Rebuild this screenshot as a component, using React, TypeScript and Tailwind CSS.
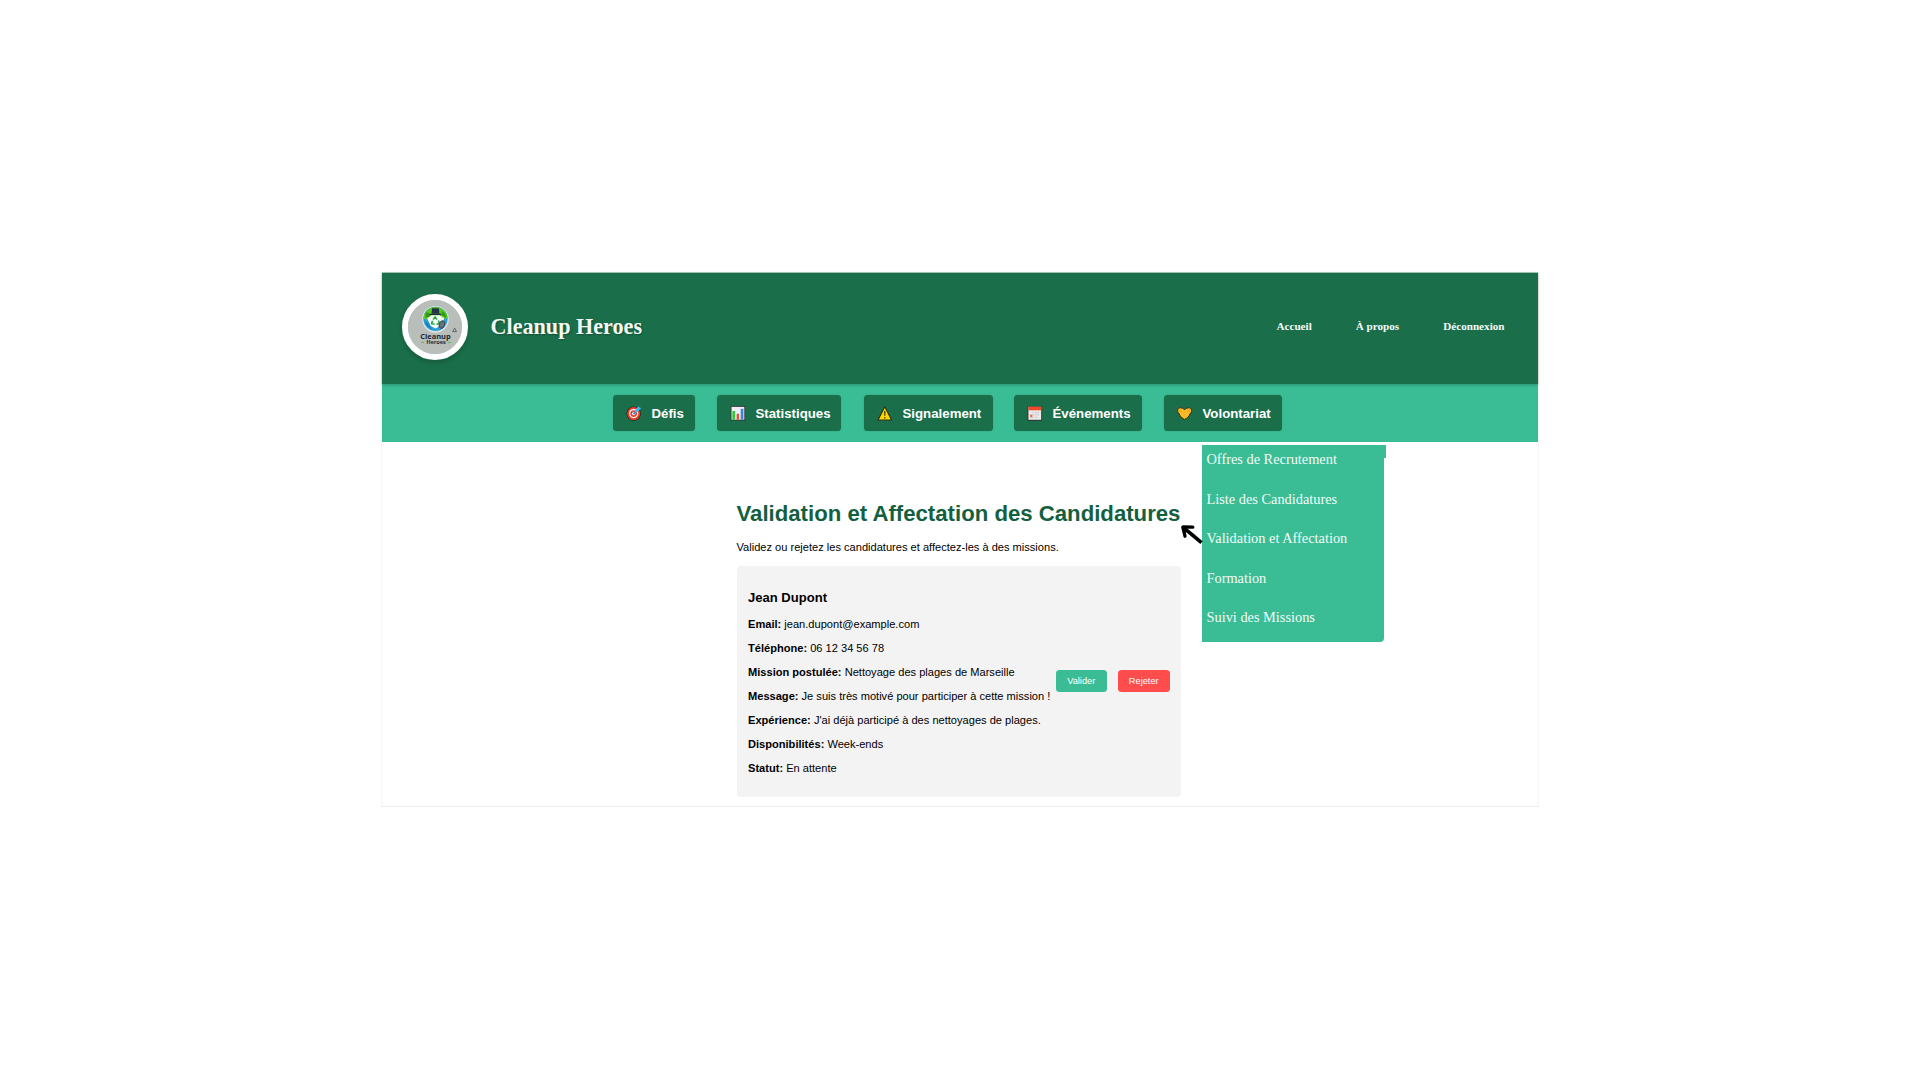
import React from "react";

const TargetIcon = () => (
  <svg viewBox="0 0 16 16" className="size-4">
    <circle cx="7.7" cy="8.6" r="7.2" fill="#2a2320" />
    <circle cx="7.7" cy="8.6" r="6.5" fill="#e8402a" />
    <circle cx="7.7" cy="8.6" r="4.6" fill="#fff" />
    <circle cx="7.7" cy="8.6" r="3.4" fill="#e8402a" />
    <circle cx="7.7" cy="8.6" r="1.7" fill="#fff" />
    <path d="M7.5 9 12 4.5" stroke="#3a8fc9" strokeWidth="1.8" />
    <path d="M9 5.2 12.600 1.200l.9 1.200 1.700.7-3.700 3.900-2.500.4z" fill="#45b8f2" />
  </svg>
);

const ChartIcon = () => (
  <svg viewBox="0 0 16 16" className="size-4">
    <rect x="0.6" y="1" width="14.6" height="14.6" fill="#33393a" />
    <rect x="1.5" y="1.9" width="12.8" height="12.8" fill="#f0eff2" />
    <rect x="2.4" y="6" width="2.7" height="8.7" fill="#2fc83a" />
    <rect x="6.7" y="8.8" width="2.3" height="5.9" fill="#ec4a35" />
    <rect x="10.7" y="3.8" width="2.7" height="10.9" fill="#3c87dc" />
  </svg>
);

const WarningIcon = () => (
  <svg viewBox="0 0 16 16" className="size-4">
    <path d="M7.8 1.8 14.6 15H1z" fill="#fcd703" stroke="#2c2e14" strokeWidth="1.1" strokeLinejoin="round" />
    <path d="M7.8 6v4.7M7.8 12v1.6" stroke="#4c4407" strokeWidth="1.3" />
  </svg>
);

const CalendarIcon = () => (
  <svg viewBox="0 0 16 16" className="size-4">
    <rect x="0.5" y="1" width="14.6" height="14.7" rx="0.6" fill="#33302f" />
    <rect x="1.4" y="1.8" width="12.8" height="13" fill="#ece9e9" />
    <rect x="1.4" y="1.8" width="12.8" height="3.5" fill="#ee4a2a" />
    <path d="M5.7 7.6h7M3 9.9h9.7M3 12.3h7.6" stroke="#c9c5c8" strokeWidth="1.3" strokeDasharray="1.5 0.9" />
    <rect x="3" y="9.6" width="2.6" height="2.6" fill="#f0a090" />
    <rect x="3.7" y="10.3" width="1.3" height="1.3" fill="#e0483a" />
  </svg>
);

const HeartIcon = () => (
  <svg viewBox="0 0 16 16" className="size-4">
    <path
      d="M7.6 14.4C5.400 13.600 3 11.400 2.300 9 .6 7.500.300 5.500 1 4.300c.8-1.500 2.200-1.900 3.300-1.200 1.300 0 2.500.6 3.300 1.700.8-1.100 2-1.700 3.300-1.700 1.100-.7 2.500-.3 3.300 1.200.7 1.200.4 3.200-1.300 4.700-.7 2.400-3.100 4.600-5.300 5.400z"
      fill="#fdb92a"
      stroke="#33300f"
      strokeWidth="1"
    />
    <path d="M2.400 4.600 4.600 7M12.800 4.600 10.600 7" stroke="#e2940f" strokeWidth="0.900" />
  </svg>
);

const Logo = () => (
  <svg viewBox="0 0 55 55" className="size-full" fontFamily="'Open Sans', 'Liberation Sans', sans-serif">
    <rect width="55" height="55" fill="#b9beba" />
    <circle cx="28" cy="19.6" r="13.6" fill="#dfe4e2" />
    <circle cx="28" cy="19.2" r="12.4" fill="#2b9fd6" />
    <path d="M15.700 19A12.4 12.4 0 0 1 40.400 18c-4 2-7 1-9 4-4 1-10-3-15.700-3z" fill="#58c91f" />
    <path d="M18 13c3-1 4 1 5 3l-2 2-3-.5zM34 11l4 3 1 4-4-2z" fill="#2f9a1c" />
    <path d="M17 22c3 0 5 3 8 8-4-1-7-4-8-8z" fill="#1583c8" />
    <path d="M24.500 8.500h7l.5 5.500h-8z" fill="#25364a" />
    <path d="M22 14h12v1.300H22z" fill="#1d2c3e" />
    <path d="M19.500 18.500 24 15.500h8l5 3-4 8-5 2.500-5-2.500z" fill="#f4f8f4" />
    <path d="m25.600 20 2-2.600 2 2.600M31 21l1 3-3 .8M27 24.800l-3-.6 1-3" fill="none" stroke="#27a845" strokeWidth="1.600" />
    <ellipse cx="34.500" cy="25" rx="2.700" ry="4" transform="rotate(20 34.500 25)" fill="#65727d" stroke="#2c3a48" strokeWidth="0.800" />
    <path d="m47.500 28.600 2 3.600h-4z" fill="none" stroke="#5d666c" strokeWidth="1" />
    <text x="28" y="39.800" textAnchor="middle" fontSize="7.800" fontWeight="700" fill="#1c2733" textLength="31" lengthAdjust="spacingAndGlyphs">
      Cleanup
    </text>
    <text x="28.500" y="45.300" textAnchor="middle" fontSize="5.200" fontWeight="700" fill="#25303a" textLength="20" lengthAdjust="spacingAndGlyphs">
      Heroes
    </text>
    <path d="M13.500 43.200h3M40.500 43.200h3" stroke="#47b748" strokeWidth="0.900" />
  </svg>
);

const ArrowPointer = () => (
  <svg viewBox="0 0 24 22" className="absolute left-[798px] top-[251px] h-[22px] w-6" fill="none" stroke="#000" strokeLinecap="round" strokeLinejoin="round">
    <path d="M4.500 4.300 21.500 18.600" strokeWidth="3.700" strokeLinecap="butt" />
    <path d="M5 12.200 2.800 3 12.800 3.200" strokeWidth="3.300" />
    <path d="M3.500 3.500 8 7.500 5.500 8z" fill="#000" />
  </svg>
);

const tabs = [
  { label: "Défis", icon: <TargetIcon />, width: "w-[82px]" },
  { label: "Statistiques", icon: <ChartIcon />, width: "w-[124px] ml-[22px]" },
  { label: "Signalement", icon: <WarningIcon />, width: "w-[129px] ml-[23px]" },
  { label: "Événements", icon: <CalendarIcon />, width: "w-[128px] ml-[21px]" },
  { label: "Volontariat", icon: <HeartIcon />, width: "w-[118px] ml-[22px]" },
];

const menuItems = [
  "Offres de Recrutement",
  "Liste des Candidatures",
  "Validation et Affectation",
  "Formation",
  "Suivi des Missions",
];

const details = [
  ["Email:", "jean.dupont@example.com"],
  ["Téléphone:", "06 12 34 56 78"],
  ["Mission postulée:", "Nettoyage des plages de Marseille"],
  ["Message:", "Je suis très motivé pour participer à cette mission !"],
  ["Expérience:", "J'ai déjà participé à des nettoyages de plages."],
  ["Disponibilités:", "Week-ends"],
  ["Statut:", "En attente"],
];

export default function App() {
  return (
    <div className="flex h-[1080px] w-[1920px] items-start overflow-hidden bg-white pl-[381px] pt-[272px] font-['Liberation_Sans',Arial,sans-serif] text-black">
      <div className="relative h-[535px] w-[1158px] border border-[#f6f6f6] border-b-[#ebebeb] border-t-[#a9cabb] bg-white">
        <header className="relative z-10 flex h-[111px] items-start bg-[#1a6f4a] font-['Liberation_Serif',serif] font-bold text-[#f4f9f5] shadow-[0_1px_3px_rgba(0,0,0,0.25)]">
          <div className="ml-5 mt-[21px] size-[66px] shrink-0 overflow-hidden rounded-full border-[6px] border-white bg-[#b9beba] shadow-[0_3px_5px_rgba(0,0,0,0.18)]">
            <Logo />
          </div>
          <h1 className="ml-[22.500px] mt-[39px] text-[22.150px] leading-[30px] [text-shadow:1px_1px_2px_rgba(0,0,0,0.3)]">Cleanup Heroes</h1>
          <nav className="ml-auto mr-[33.500px] mt-[43px] flex gap-11 text-[11.150px] leading-5">
            <a>Accueil</a>
            <a>À propos</a>
            <a>Déconnexion</a>
          </nav>
        </header>

        <nav className="flex h-[58px] items-start bg-[#3abd95] pl-[230.500px] pt-[10.500px]">
          {tabs.map((tab) => (
            <button
              key={tab.label}
              className={`flex h-[36.500px] shrink-0 items-center rounded-[3.500px] bg-[#1a6f4a] pl-[13px] text-[13.250px] font-bold text-white shadow-[0_0_2px_rgba(0,0,0,0.15)] ${tab.width}`}
            >
              <span className="shrink-0">{tab.icon}</span>
              <span className="ml-2.5 whitespace-nowrap pt-0.5 leading-5">{tab.label}</span>
            </button>
          ))}
        </nav>

        <main className="ml-[354.500px] mt-[57px] w-[444.500px]">
          <h2 className="whitespace-nowrap text-[22.180px] font-bold leading-[30px] text-[#145f3f]">
            Validation et Affectation des Candidatures
          </h2>
          <p className="mt-[11px] text-[11.080px] leading-[14px]">
            Validez ou rejetez les candidatures et affectez-les à des missions.
          </p>
          <section className="mt-[11.500px] flex h-[231.500px] rounded-[4px] bg-[#f3f3f3] pl-[11.500px] pr-[11px]">
            <div className="whitespace-nowrap pt-[24.500px]">
              <h3 className="text-[13.050px] font-bold leading-4">Jean Dupont</h3>
              <div className="mt-1.5 text-[11.080px] leading-[24px]">
                {details.map(([label, value]) => (
                  <p key={label}>
                    <strong className="font-bold">{label}</strong> {value}
                  </p>
                ))}
              </div>
            </div>
            <div className="ml-auto flex gap-[11px] self-center text-[9.250px] leading-[22px] text-white">
              <button className="h-[22px] w-[50.500px] rounded-[3.500px] bg-[#3abd95]">Valider</button>
              <button className="h-[22px] w-[52.500px] rounded-[3.500px] bg-[#ff4d4d]">Rejeter</button>
            </div>
          </section>
        </main>

        <div className="absolute left-[820px] top-[172px] h-[13px] w-[184px] bg-[#3abd95]" />
        <ul className="absolute left-[820px] top-[172px] h-[197px] w-[181.500px] rounded-br-[4px] bg-[#3abd95] pl-[4.500px] font-['Liberation_Serif',serif] text-[14.350px] leading-[39.600px] text-[#f3fbf7]">
          {menuItems.map((item, i) => (
            <li key={item} className={i === 0 ? "-mt-[5px]" : ""}>
              {item}
            </li>
          ))}
        </ul>
        <ArrowPointer />
      </div>
    </div>
  );
}
